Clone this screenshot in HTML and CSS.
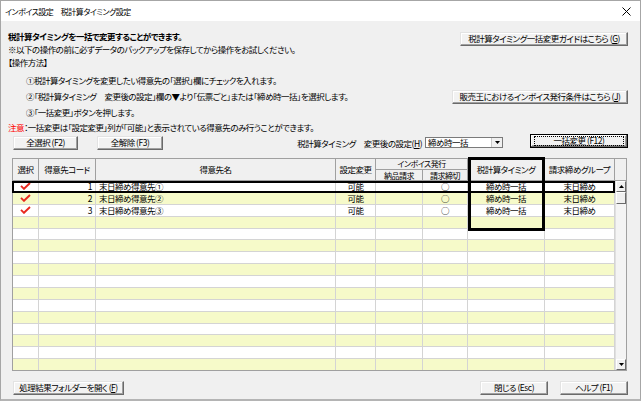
FILE: index.html
```html
<!DOCTYPE html>
<html lang="ja">
<head>
<meta charset="utf-8">
<title>インボイス設定　税計算タイミング設定</title>
<link rel="stylesheet" href="styles.css">
</head>
<body>
<div class="window">
  <div class="titlebar">
    <span class="title">インボイス設定　税計算タイミング設定</span>
    <svg class="close" width="9" height="9" viewBox="0 0 9 9"><path d="M0.5 0.5L8.5 8.5M8.5 0.5L0.5 8.5" stroke="#000" stroke-width="1" fill="none"/></svg>
  </div>
  <div class="content">
    <div class="top">
      <div class="intro">
        <p class="line lead">税計算タイミングを一括で変更することができます。</p>
        <p class="line">※以下の操作の前に必ずデータのバックアップを保存してから操作をお試しください。</p>
        <p class="line">【操作方法】</p>
        <div class="steps">
          <p class="step">①税計算タイミングを変更したい得意先の「選択」欄にチェックを入れます。</p>
          <p class="step">②「税計算タイミング　変更後の設定」欄の▼より「伝票ごと」または「締め時一括」を選択します。</p>
          <p class="step">③「一括変更」ボタンを押します。</p>
        </div>
        <p class="caution"><span class="red">注意</span>：一括変更は「設定変更」列が「可能」と表示されている得意先のみ行うことができます。</p>
      </div>
      <div class="links">
        <button class="btn guide">税計算タイミング一括変更ガイドはこちら (<u>G</u>)</button>
        <button class="btn cond">販売王におけるインボイス発行条件はこちら (<u>J</u>)</button>
      </div>
    </div>

    <div class="controls">
      <button class="btn sel-all">全選択 (F2)</button>
      <button class="btn clr-all">全解除 (F3)</button>
      <span class="spacer"></span>
      <span class="label">税計算タイミング　変更後の設定(<u>H</u>)</span>
      <div class="combo"><span class="combo-text">締め時一括</span><span class="combo-btn"><svg width="5" height="3" viewBox="0 0 5 3"><path d="M0 0H5L2.5 3Z" fill="#000"/></svg></span></div>
      <button class="btn default-btn"><span class="focus">一括変更 (F12)</span></button>
    </div>

    <div class="grid">
      <div class="head">
        <div class="hc span2">選択</div>
        <div class="hc span2">得意先コード</div>
        <div class="hc span2">得意先名</div>
        <div class="hc span2">設定変更</div>
        <div class="hc invoice">インボイス発行</div>
        <div class="hc span2">税計算タイミング</div>
        <div class="hc span2">請求締めグループ</div>
        <div class="hc span2 blank"></div>
        <div class="hc sub">納品請求</div>
        <div class="hc sub">請求締切</div>
      </div>
      <div class="body">
        <div class="rows">
          <div class="row">
            <div class="c chk"><svg width="11" height="8" viewBox="0 0 11 8"><path d="M1 3.8L4 6.8L10 1" stroke="#e8281e" stroke-width="1.9" fill="none"/></svg></div>
            <div class="c num">1</div><div class="c name">末日締め得意先①</div><div class="c ctr">可能</div><div class="c"></div><div class="c ctr">○</div><div class="c ctr">締め時一括</div><div class="c ctr">末日締め</div>
          </div>
          <div class="row alt">
            <div class="c chk"><svg width="11" height="8" viewBox="0 0 11 8"><path d="M1 3.8L4 6.8L10 1" stroke="#e8281e" stroke-width="1.9" fill="none"/></svg></div>
            <div class="c num">2</div><div class="c name">末日締め得意先②</div><div class="c ctr">可能</div><div class="c"></div><div class="c ctr">○</div><div class="c ctr">締め時一括</div><div class="c ctr">末日締め</div>
          </div>
          <div class="row">
            <div class="c chk"><svg width="11" height="8" viewBox="0 0 11 8"><path d="M1 3.8L4 6.8L10 1" stroke="#e8281e" stroke-width="1.9" fill="none"/></svg></div>
            <div class="c num">3</div><div class="c name">末日締め得意先③</div><div class="c ctr">可能</div><div class="c"></div><div class="c ctr">○</div><div class="c ctr">締め時一括</div><div class="c ctr">末日締め</div>
          </div>
          <div class="row alt"><div class="c"></div><div class="c"></div><div class="c"></div><div class="c"></div><div class="c"></div><div class="c"></div><div class="c"></div><div class="c"></div></div>
          <div class="row"><div class="c"></div><div class="c"></div><div class="c"></div><div class="c"></div><div class="c"></div><div class="c"></div><div class="c"></div><div class="c"></div></div>
          <div class="row alt"><div class="c"></div><div class="c"></div><div class="c"></div><div class="c"></div><div class="c"></div><div class="c"></div><div class="c"></div><div class="c"></div></div>
          <div class="row"><div class="c"></div><div class="c"></div><div class="c"></div><div class="c"></div><div class="c"></div><div class="c"></div><div class="c"></div><div class="c"></div></div>
          <div class="row alt"><div class="c"></div><div class="c"></div><div class="c"></div><div class="c"></div><div class="c"></div><div class="c"></div><div class="c"></div><div class="c"></div></div>
          <div class="row"><div class="c"></div><div class="c"></div><div class="c"></div><div class="c"></div><div class="c"></div><div class="c"></div><div class="c"></div><div class="c"></div></div>
          <div class="row alt"><div class="c"></div><div class="c"></div><div class="c"></div><div class="c"></div><div class="c"></div><div class="c"></div><div class="c"></div><div class="c"></div></div>
          <div class="row"><div class="c"></div><div class="c"></div><div class="c"></div><div class="c"></div><div class="c"></div><div class="c"></div><div class="c"></div><div class="c"></div></div>
          <div class="row alt"><div class="c"></div><div class="c"></div><div class="c"></div><div class="c"></div><div class="c"></div><div class="c"></div><div class="c"></div><div class="c"></div></div>
          <div class="row"><div class="c"></div><div class="c"></div><div class="c"></div><div class="c"></div><div class="c"></div><div class="c"></div><div class="c"></div><div class="c"></div></div>
          <div class="row alt"><div class="c"></div><div class="c"></div><div class="c"></div><div class="c"></div><div class="c"></div><div class="c"></div><div class="c"></div><div class="c"></div></div>
          <div class="row"><div class="c"></div><div class="c"></div><div class="c"></div><div class="c"></div><div class="c"></div><div class="c"></div><div class="c"></div><div class="c"></div></div>
          <div class="row alt"><div class="c"></div><div class="c"></div><div class="c"></div><div class="c"></div><div class="c"></div><div class="c"></div><div class="c"></div><div class="c"></div></div>
        </div>
        <div class="vscroll">
          <div class="sb-btn"><svg width="5" height="3" viewBox="0 0 5 3"><path d="M0 3H5L2.5 0Z" fill="#000"/></svg></div>
          <div class="sb-thumb"></div>
          <div class="sb-track"></div>
          <div class="sb-btn"><svg width="5" height="3" viewBox="0 0 5 3"><path d="M0 0H5L2.5 3Z" fill="#000"/></svg></div>
        </div>
      </div>
      <div class="selected-row"></div>
      <div class="timing-box"></div>
    </div>

    <div class="footer">
      <button class="btn folder">処理結果フォルダーを開く (<u>F</u>)</button>
      <span class="spacer"></span>
      <button class="btn close-btn">閉じる (Esc)</button>
      <button class="btn help">ヘルプ (F1)</button>
    </div>
  </div>
</div>
</body>
</html>
```

FILE: styles.css
```css
* { box-sizing: border-box; }
html, body { margin: 0; padding: 0; background: #fff; }
body {
  font-family: "Noto Sans CJK JP", "Noto Sans", sans-serif;
  font-size: 8.5px;
  letter-spacing: -0.5px;
  font-feature-settings: "palt";
  color: #000;
}
p { margin: 0; }
u { text-decoration: underline; text-underline-offset: 1px; }

.window {
  width: 641px;
  height: 401px;
  border: 1px solid #a6a6a6;
  border-bottom: 2px solid #b4b4b4;
  display: flex;
  flex-direction: column;
  background: #f0f0f0;
}

.titlebar {
  height: 20px;
  background: #fff;
  display: flex;
  align-items: center;
  padding-left: 4px;
  padding-right: 9px;
  flex: none;
}
.title { flex: 1; font-size: 8px; }
.close { display: block; }

.content {
  flex: 1;
  padding: 0 12px 0 7px;
  display: flex;
  flex-direction: column;
}

.top { display: flex; }
.intro { flex: 1; padding-top: 9px; }
.line { line-height: 13px; height: 13px; white-space: nowrap; }
.lead { font-weight: bold; }
.steps { padding-left: 18px; margin-top: 3px; }
.step { line-height: 16px; height: 16px; white-space: nowrap; }
.caution { line-height: 14px; height: 14px; white-space: nowrap; }
.red { color: #ff0000; }

.links {
  width: 176px;
  display: flex;
  flex-direction: column;
  align-items: flex-end;
}

.btn {
  font: inherit;
  letter-spacing: -0.5px;
  font-feature-settings: "palt";
  color: #000;
  background: #f2f2f2;
  border: 1px solid;
  border-color: #e3e3e3 #6a6a6a #6a6a6a #e3e3e3;
  box-shadow: inset -1px -1px 0 #a0a0a0, inset 1px 1px 0 #fff;
  height: 14px;
  padding: 0 0 1px 0;
  display: flex;
  align-items: center;
  justify-content: center;
  line-height: 1;
  white-space: nowrap;
  flex: none;
}
.guide { width: 168px; margin-top: 11px; }
.cond { width: 176px; margin-top: 44px; }

.controls {
  display: flex;
  align-items: flex-start;
  height: 16px;
}
.sel-all { margin-left: 5px; margin-top: 2px; width: 65px; }
.clr-all { margin-left: 19px; margin-top: 2px; width: 66px; }
.spacer { flex: 1; }
.label { margin-top: 3px; line-height: 12px; margin-right: 3px; white-space: nowrap; }
.combo {
  margin-top: 3px;
  width: 78px;
  height: 11px;
  background: #fff;
  border: 1px solid #7a7a7a;
  display: flex;
  align-items: stretch;
}
.combo-text { flex: 1; padding-left: 2px; line-height: 9px; }
.combo-btn {
  width: 11px;
  background: #f0f0f0;
  border-left: 1px solid #c8c8c8;
  display: flex;
  align-items: center;
  justify-content: center;
}
.default-btn {
  margin-left: 27px;
  width: 98px;
  padding: 0;
  border-color: #000;
  box-shadow: inset -1px -1px 0 #6a6a6a, inset 1px 1px 0 #fff, inset -2px -2px 0 #a0a0a0;
}
.focus {
  display: flex;
  align-items: center;
  justify-content: center;
  width: 90px;
  height: 10px;
  padding-bottom: 1px;
  border: 1px dotted #000;
}

.grid {
  position: relative;
  margin-top: 8px;
  margin-left: 4px;
  width: 615px;
  height: 213px;
  border: 1px solid #a0a0a0;
  background: #fff;
  display: flex;
  flex-direction: column;
}
.head {
  display: grid;
  grid-template-columns: 26px 57px 240px 40px 47px 45px 77px 70px 1fr;
  grid-template-rows: 11px 10px;
  height: 22px;
  background: #f0f0f0;
  border-bottom: 1px solid #a0a0a0;
  flex: none;
}
.hc {
  border-right: 1px solid #a0a0a0;
  display: flex;
  align-items: center;
  justify-content: center;
  white-space: nowrap;
  line-height: 1;
  overflow: hidden;
}
.span2 { grid-row: 1 / 3; }
.blank { border-right: none; }
.invoice { grid-column: 5 / 7; grid-row: 1; border-bottom: 1px solid #a0a0a0; font-size: 8px; line-height: 10px; }
.sub { grid-row: 2; font-size: 8px; line-height: 9px; }

.body { flex: 1; display: flex; }
.rows { width: 602px; display: flex; flex-direction: column; }
.row {
  flex: 1;
  display: grid;
  grid-template-columns: 26px 57px 240px 40px 47px 45px 77px 70px;
  border-bottom: 1px solid #d4d4d4;
  background: #fff;
}
.row.alt { background: #f6fac9; }
.row:last-child { border-bottom: none; }
.c {
  border-right: 1px solid #d4d4d4;
  display: flex;
  align-items: center;
  white-space: nowrap;
  line-height: 1;
  overflow: hidden;
}
.chk { justify-content: center; }
.num { justify-content: flex-end; padding-right: 3px; }
.name { padding-left: 3px; }
.ctr { justify-content: center; }

.vscroll {
  flex: 1;
  background: #f0f0f0;
  display: flex;
  flex-direction: column;
  border-left: 1px solid #e0e0e0;
}
.sb-btn {
  height: 11px;
  background: #f0f0f0;
  border: 1px solid;
  border-color: #fff #6a6a6a #6a6a6a #fff;
  display: flex;
  align-items: center;
  justify-content: center;
}
.sb-thumb {
  height: 12px;
  background: #f0f0f0;
  border: 1px solid;
  border-color: #fff #6a6a6a #6a6a6a #fff;
}
.sb-track { flex: 1; background: #f4f4f4; }

.selected-row {
  position: absolute;
  left: -1px;
  top: 22px;
  width: 603px;
  height: 12px;
  border: 2px solid #000;
}
.timing-box {
  position: absolute;
  left: 455px;
  top: -2px;
  width: 77px;
  height: 74px;
  border: 3px solid #000;
}

.footer {
  display: flex;
  margin-top: 10px;
}
.folder { margin-left: 5px; width: 111px; }
.close-btn { width: 68px; }
.help { width: 68px; margin-left: 12px; }
```
